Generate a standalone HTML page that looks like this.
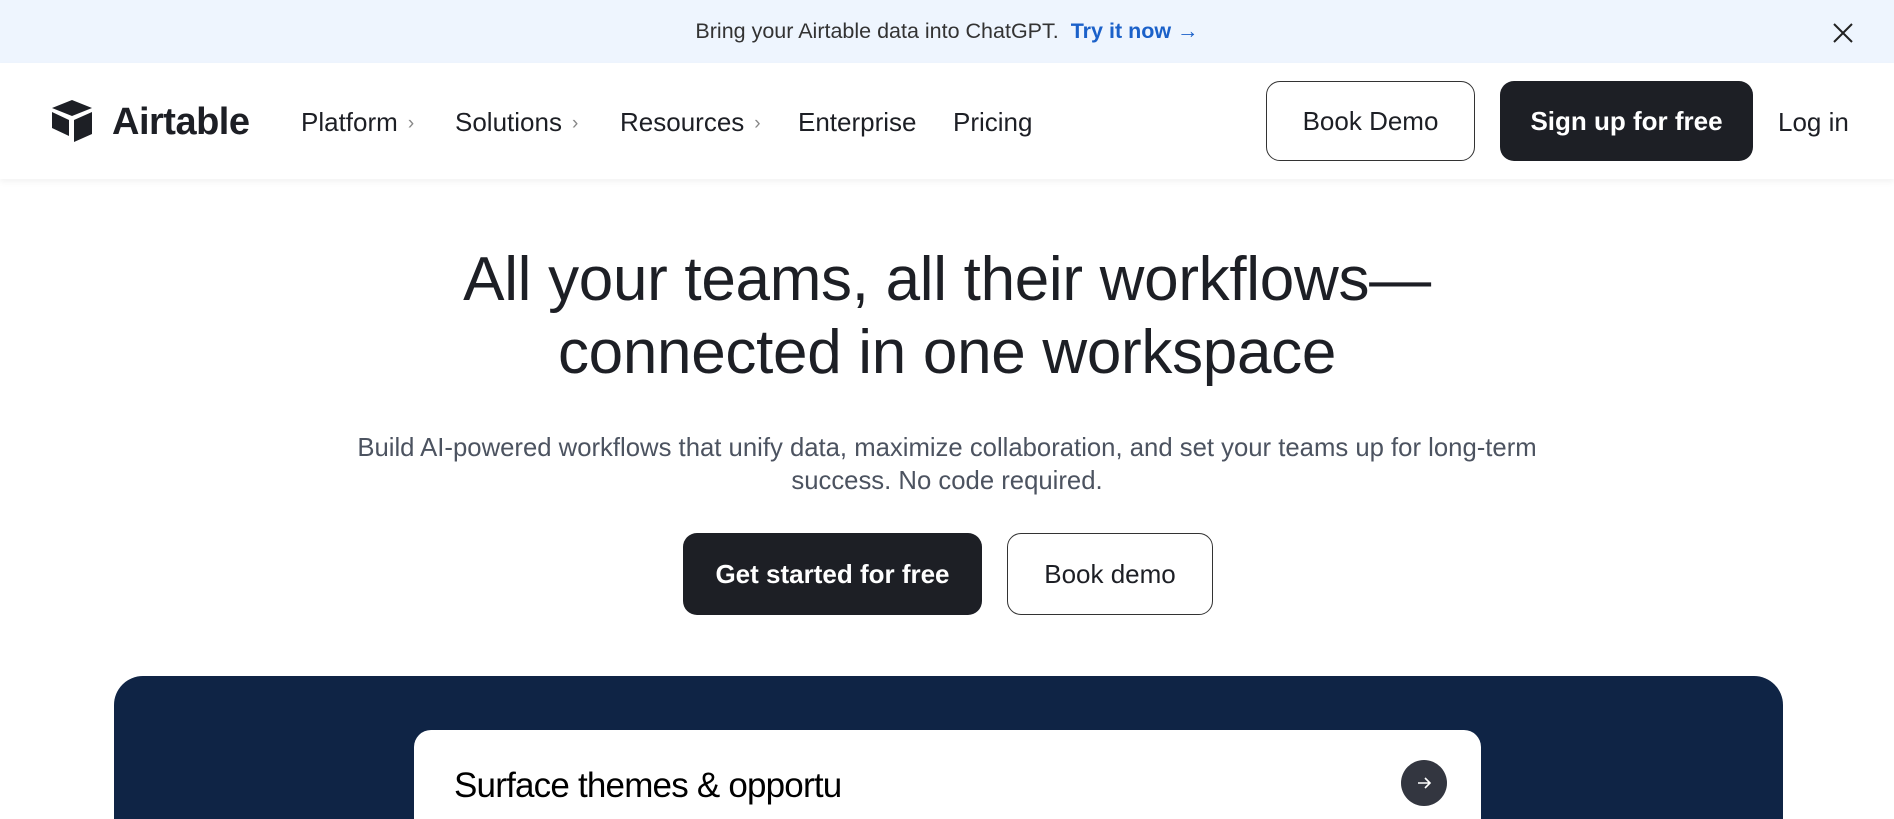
<!DOCTYPE html>
<html style="overflow:hidden;height:819px"><head><meta charset="utf-8"><style>
*{margin:0;padding:0;box-sizing:border-box}
body{width:1894px;height:819px;overflow:hidden;background:#fff;font-family:"Liberation Sans",sans-serif;color:#1d1f25;position:relative}
.banner{position:absolute;left:0;top:0;width:1894px;height:63px;background:#eef5fe;display:flex;align-items:center;justify-content:center;font-size:21.5px;color:#333}
.banner a{color:#1b61c9;margin-left:12px;font-weight:bold}
.close{position:absolute;left:1832px;top:22px}
.nav{position:absolute;top:63px;left:0;width:1894px;height:116px;box-shadow:0 3px 6px rgba(0,0,0,.05)}
.abs{position:absolute}
.item{position:absolute;top:107px;font-size:26px;line-height:30px}
.chev{color:#888;font-size:19px;margin-left:10px;position:relative;top:-2px}
.btn{position:absolute;display:flex;align-items:center;justify-content:center;border-radius:14px;font-size:26px}
h1{position:absolute;left:0;width:1894px;top:243px;text-align:center;font-weight:normal;font-size:62px;line-height:73px;letter-spacing:-0.3px}
.sub{position:absolute;left:0;width:1894px;top:432px;text-align:center;font-size:25.7px;line-height:33px;color:#4c5360}
</style></head><body>
<div class="banner">Bring your Airtable data into ChatGPT. <a>Try it now →</a></div>
<svg class="close" width="22" height="22" viewBox="0 0 22 22"><path d="M2 2L20 20M20 2L2 20" stroke="#222" stroke-width="2"/></svg>
<div class="nav"></div>
<svg class="abs" style="left:51px;top:100px" width="42" height="43" viewBox="0 0 42 43"><path d="M21 0L41 8L21 16L1 8Z" fill="#1d1f25"/><path d="M23 20L41 12V34L23 42Z" fill="#1d1f25"/><path d="M1 12L18 20V36L1 28Z" fill="#1d1f25"/></svg>
<div class="abs" style="left:112px;top:100px;font-size:38px;font-weight:bold;letter-spacing:-0.5px;line-height:44px">Airtable</div>
<div class="item" style="left:301px">Platform<span class="chev">›</span></div>
<div class="item" style="left:455px">Solutions<span class="chev">›</span></div>
<div class="item" style="left:620px">Resources<span class="chev">›</span></div>
<div class="item" style="left:798px">Enterprise</div>
<div class="item" style="left:953px">Pricing</div>
<div class="btn" style="left:1266px;top:81px;width:209px;height:80px;border:1.5px solid #333">Book Demo</div>
<div class="btn" style="left:1500px;top:81px;width:253px;height:80px;background:#1d1f25;color:#fff;font-weight:bold">Sign up for free</div>
<div class="item" style="left:1778px">Log in</div>
<h1>All your teams, all their workflows—<br>connected in one workspace</h1>
<div class="sub">Build AI-powered workflows that unify data, maximize collaboration, and set your teams up for long-term<br>success. No code required.</div>
<div class="btn" style="left:683px;top:533px;width:299px;height:82px;background:#1d1f25;color:#fff;font-weight:bold">Get started for free</div>
<div class="btn" style="left:1007px;top:533px;width:206px;height:82px;border:1.5px solid #333">Book demo</div>
<div class="abs" style="left:114px;top:676px;width:1669px;height:143px;background:#0f2445;border-radius:29px 29px 0 0"></div>
<div class="abs" style="left:414px;top:730px;width:1067px;height:89px;background:#fff;border-radius:17px 17px 0 0"></div>
<div class="abs" style="left:454px;top:766px;font-size:35px;letter-spacing:-0.8px;color:#000">Surface themes &amp; opportu</div>
<div class="abs" style="left:1401px;top:760px;width:46px;height:46px;border-radius:50%;background:#333640"></div>
<svg class="abs" style="left:1414px;top:773px" width="20" height="20" viewBox="0 0 20 20"><path d="M4 10H16M11 5L16 10L11 15" stroke="#fff" stroke-width="1.6" fill="none"/></svg>
</body></html>
